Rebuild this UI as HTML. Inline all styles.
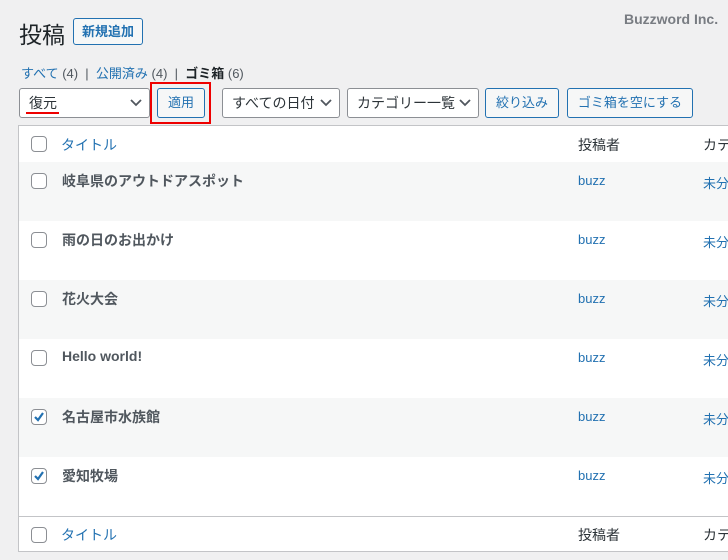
<!DOCTYPE html>
<html><head><meta charset="utf-8"><style>
body{margin:0;width:728px;height:560px;background:#f0f0f1;font-family:"Liberation Sans","Noto Sans CJK JP",sans-serif;font-size:13px;color:#3c434a;position:relative;overflow:hidden}
div{white-space:nowrap}
.a{position:absolute}
.btn{position:absolute;border:1px solid #2271b1;border-radius:3px;background:#f6f7f7;color:#2271b1;box-sizing:border-box;height:30px;line-height:28px;text-align:center;font-size:13px}
.sel{position:absolute;border:1px solid #8c8f94;border-radius:3px;background:#fff;box-sizing:border-box;height:30px;line-height:28px;padding-left:9px;color:#2c3338;font-size:14px}
.sel svg{position:absolute;right:7px;top:10px}
.tbl{position:absolute;left:18px;top:125px;width:720px;height:427px;background:#fff;border:1px solid #c3c4c7;box-sizing:border-box;overflow:hidden}
.row{position:absolute;left:0;width:100%;height:59px}
.cb{position:absolute;left:12px;width:14px;height:14px;border:1px solid #8c8f94;border-radius:4px;background:#fff}
.t{position:absolute;left:43px;font-weight:bold;font-size:14px;color:#50575e}
.au{position:absolute;left:559px;color:#2271b1;font-size:13px}
.ca{position:absolute;left:684px;color:#2271b1;font-size:13px}
</style></head><body>
<div class="a" style="left:19px;top:16px;font-size:23px;color:#1d2327">投稿</div>
<div class="btn" style="left:73px;top:18px;width:70px;height:27px;line-height:25px;font-weight:bold;font-size:13px">新規追加</div>
<div class="a" style="left:624px;top:11px;color:#787c82;font-weight:bold;font-size:14px">Buzzword Inc.</div>
<div class="a" style="left:21px;top:63px;font-size:13px;color:#50575e"><span style="color:#2271b1">すべて</span> (4) &nbsp;| &nbsp;<span style="color:#2271b1">公開済み</span> (4) &nbsp;| &nbsp;<b style="color:#1d2327">ゴミ箱</b> (6)</div>
<div class="sel" style="left:19px;top:88px;width:131px">復元<svg width="12" height="8"><path d="M1 1l5 5 5-5" stroke="#50575e" stroke-width="1.8" fill="none"/></svg></div>
<div class="a" style="left:26px;top:112px;width:33px;height:2px;background:#e00"></div>
<div class="a" style="left:150px;top:82px;width:61px;height:42px;border:2px solid #e00;box-sizing:border-box"></div>
<div class="btn" style="left:157px;top:88px;width:48px">適用</div>
<div class="sel" style="left:222px;top:88px;width:118px">すべての日付<svg width="12" height="8"><path d="M1 1l5 5 5-5" stroke="#50575e" stroke-width="1.8" fill="none"/></svg></div>
<div class="sel" style="left:347px;top:88px;width:132px">カテゴリー一覧<svg width="12" height="8"><path d="M1 1l5 5 5-5" stroke="#50575e" stroke-width="1.8" fill="none"/></svg></div>
<div class="btn" style="left:485px;top:88px;width:74px">絞り込み</div>
<div class="btn" style="left:567px;top:88px;width:126px">ゴミ箱を空にする</div>
<div class="tbl">
 <div class="row" style="top:0;height:36px;border-bottom:1px solid #c3c4c7"><div class="cb" style="top:10px"></div><div class="a" style="left:42px;top:9px;color:#2271b1;font-size:14px">タイトル</div><div class="a" style="left:559px;top:9px;font-size:14px;color:#2c3338">投稿者</div><div class="a" style="left:684px;top:9px;font-size:14px;color:#2c3338">カテゴリー</div></div>
 <div class="row" style="top:36px;background:#f6f7f7"><div class="cb" style="top:11px"></div><div class="t" style="top:9px">岐阜県のアウトドアスポット</div><div class="au" style="top:11px">buzz</div><div class="ca" style="top:11px">未分類</div></div>
 <div class="row" style="top:95px"><div class="cb" style="top:11px"></div><div class="t" style="top:9px">雨の日のお出かけ</div><div class="au" style="top:11px">buzz</div><div class="ca" style="top:11px">未分類</div></div>
 <div class="row" style="top:154px;background:#f6f7f7"><div class="cb" style="top:11px"></div><div class="t" style="top:9px">花火大会</div><div class="au" style="top:11px">buzz</div><div class="ca" style="top:11px">未分類</div></div>
 <div class="row" style="top:213px"><div class="cb" style="top:11px"></div><div class="t" style="top:9px">Hello world!</div><div class="au" style="top:11px">buzz</div><div class="ca" style="top:11px">未分類</div></div>
 <div class="row" style="top:272px;background:#f6f7f7"><div class="cb" style="top:11px"><svg width="14" height="14" style="position:absolute;left:0;top:0"><path d="M3 7l3 3 5-7" stroke="#2271b1" stroke-width="2.2" fill="none"/></svg></div><div class="t" style="top:9px">名古屋市水族館</div><div class="au" style="top:11px">buzz</div><div class="ca" style="top:11px">未分類</div></div>
 <div class="row" style="top:331px"><div class="cb" style="top:11px"><svg width="14" height="14" style="position:absolute;left:0;top:0"><path d="M3 7l3 3 5-7" stroke="#2271b1" stroke-width="2.2" fill="none"/></svg></div><div class="t" style="top:9px">愛知牧場</div><div class="au" style="top:11px">buzz</div><div class="ca" style="top:11px">未分類</div></div>
 <div class="row" style="top:390px;height:36px;border-top:1px solid #c3c4c7"><div class="cb" style="top:10px"></div><div class="a" style="left:42px;top:8px;color:#2271b1;font-size:14px">タイトル</div><div class="a" style="left:559px;top:8px;font-size:14px;color:#2c3338">投稿者</div><div class="a" style="left:684px;top:8px;font-size:14px;color:#2c3338">カテゴリー</div></div>
</div>
</body></html>
